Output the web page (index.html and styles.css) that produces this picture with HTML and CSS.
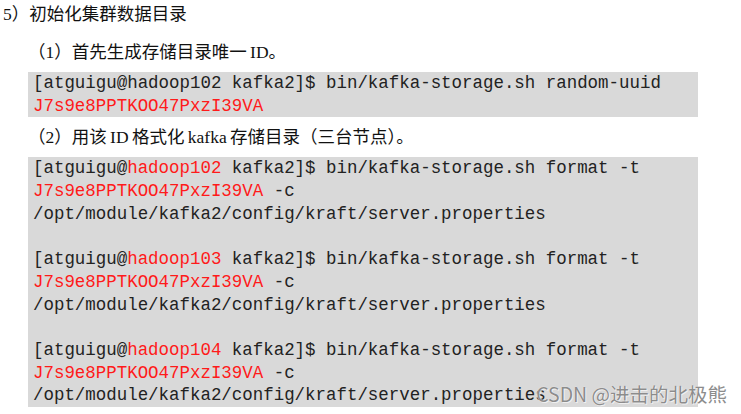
FILE: index.html
```html
<!DOCTYPE html>
<html lang="zh">
<head>
<meta charset="utf-8">
<link rel="stylesheet" href="styles.css">
</head>
<body>
<div class="page">
  <p class="h1">5）初始化集群数据目录</p>
  <p class="sub">（1）首先生成存储目录唯一 ID。</p>
  <pre class="code">[atguigu@hadoop102 kafka2]$ bin/kafka-storage.sh random-uuid
<span class="red">J7s9e8PPTKOO47PxzI39VA</span></pre>
  <p class="sub">（2）用该 ID 格式化 kafka 存储目录（三台节点）。</p>
  <pre class="code">[atguigu@<span class="red">hadoop102</span> kafka2]$ bin/kafka-storage.sh format -t
<span class="red">J7s9e8PPTKOO47PxzI39VA</span> -c
/opt/module/kafka2/config/kraft/server.properties

[atguigu@<span class="red">hadoop103</span> kafka2]$ bin/kafka-storage.sh format -t
<span class="red">J7s9e8PPTKOO47PxzI39VA</span> -c
/opt/module/kafka2/config/kraft/server.properties

[atguigu@<span class="red">hadoop104</span> kafka2]$ bin/kafka-storage.sh format -t
<span class="red">J7s9e8PPTKOO47PxzI39VA</span> -c
/opt/module/kafka2/config/kraft/server.properties</pre>
  <div class="watermark">CSDN @进击的北极熊</div>
</div>
</body>
</html>
```
FILE: styles.css
```css
html, body {
  margin: 0;
  padding: 0;
  background: #ffffff;
}
.page {
  position: relative;
  width: 741px;
  height: 414px;
  overflow: hidden;
  font-family: "Liberation Serif", "Noto Sans CJK SC", serif;
  color: #111;
}
.h1 {
  margin: 0 0 4px 0;
  padding-left: 3px;
  font-size: 17.5px;
  line-height: 28px;
}
.sub {
  margin: 0;
  padding-left: 28px;
  font-size: 17.5px;
  line-height: 40px;
  word-spacing: -1px;
}
.code {
  margin: 0 0 0 28px;
  width: 665px;
  padding: 0 0 0 5px;
  background: #d9d9d9;
  font-family: "Liberation Mono", monospace;
  font-size: 17.45px;
  line-height: 22.7px;
  color: #222;
  white-space: pre;
}
.red {
  color: #ff1a1a;
}
.watermark {
  position: absolute;
  right: 14px;
  top: 381px;
  font-family: "Noto Sans CJK SC", sans-serif;
  font-size: 19.5px;
  line-height: 26px;
  color: #8c8c8c;
  text-shadow: 0 0 1px #ffffff, 1px 1px 0 rgba(255,255,255,0.6);
}
```
